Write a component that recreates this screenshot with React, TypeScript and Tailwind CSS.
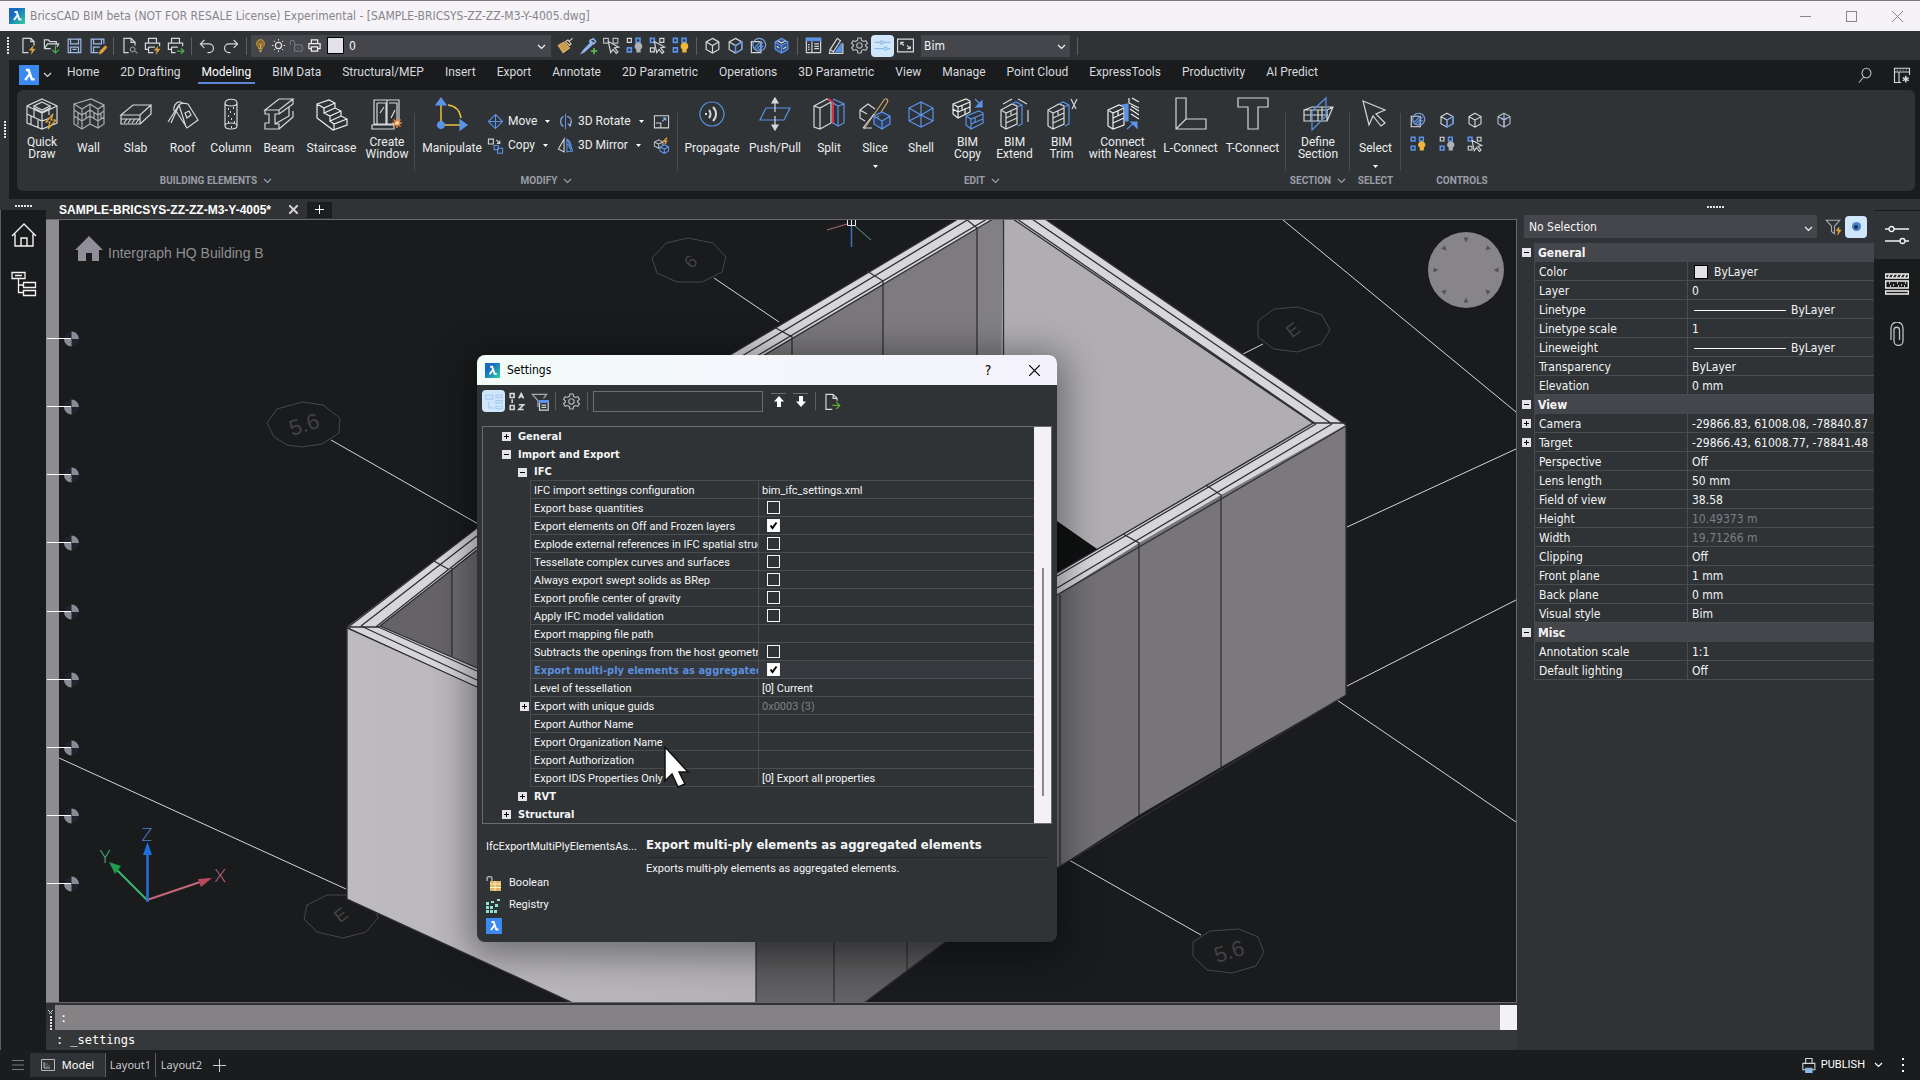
import React from "react";

type P = { d: string; c?: string; f?: string; w?: number };
type IconDef = P[];

const W = "#d5d7da";
const B = "#5b93ea";
const Y = "#e0a53a";
const CUBE = "M12 3l8 4.500v9.500l-8 4.500-8-4.500V7.500zM4 7.500l8 4.500 8-4.500M12 12v9.500";

const small: Record<string, IconDef> = {
  newFile: [{ d: "M12 21H5V3h10l4 4v5M15 3v4h4" }, { d: "M18 12l-5 6h3.500l-1 5 5-6.500H17z", c: Y, f: Y, w: 0.5 }],
  open: [{ d: "M3 16V5h5l2 2h8v4M3 16l4-6h14l-2 4M3 16h8" }, { d: "M17 12v9M13 17.500l4 4 4-4", c: "#4fae4a" }],
  save: [{ d: "M4 4h16v17H4zM7 4v6h10V4M7 21v-7h10v7M9.500 17h5", c: "#9db9e8" }],
  saveAs: [{ d: "M20 10V4H4v17h9M7 4v6h10V4M7 21v-7h8", c: "#9db9e8" }, { d: "M22 12l-7 7-1 4 4-1.500 6-7z", c: Y, f: Y, w: 0.5 }],
  preview: [{ d: "M11 21H5V3h9l5 5v4M14 3v5h5" }, { d: "M16 14a3 3 0 1 1-.1 0M18.500 18.500L22 22", c: "#8d9095" }],
  print: [{ d: "M7 9V3h10v6M7 17H3V9h18v4M7 14h8M7 14v7h6" }, { d: "M19 13l-5 5h3.500l-1 5 5-6.500H18z", c: Y, f: Y, w: 0.5 }],
  printTo: [{ d: "M7 9V3h10v6M7 17H3V9h18v4M7 14h8M7 14v7h5" }, { d: "M14 19h8M19 15.500l3.500 3.500-3.500 3.500", c: "#4fae4a" }],
  undo: [{ d: "M8 5L3 10l5 5M3 10h11a5.500 5.500 0 0 1 0 11h-2" }],
  redo: [{ d: "M16 5l5 5-5 5M21 10H10a5.500 5.500 0 0 0 0 11h2" }],
  bulb: [{ d: "M12 2.500a6.500 6.500 0 0 1 4 11.500c-1 1-1 2-1 3H9c0-1 0-2-1-3A6.500 6.500 0 0 1 12 2.500z", c: "#d39a34", f: "#8a6a30" }, { d: "M9.500 19.500h5M10.500 22h3M10 9l2 3 2-3M12 12v5", c: "#e8b65a" }],
  sun: [{ d: "M12 7a5 5 0 1 1-.1 0z", c: "#e8e8e8", w: 2 }, { d: "M12 1.500v2.500M12 20v2.500M1.500 12H4M20 12h2.500M4.500 4.500l2 2M17.500 17.500l2 2M19.500 4.500l-2 2M6.500 17.500l-2 2", c: "#e8e8e8" }],
  lock: [{ d: "M9 11h12v10H9zM15 15v2.500M9 11V7a3.500 3.500 0 0 0-7 0v4", c: "#7b828c" }],
  printer: [{ d: "M7 9V3h10v6M7 17H3V9h18v8h-4M7 14h10v7H7z", c: "#eeeeee", w: 2 }],
  brush: [{ d: "M21 3l-5 4M15 5l4 5-2 2-5-5z", c: "#d8c9a8" }, { d: "M10 8l7 7-8 6-6-9z", c: "#d8b26a", f: "#c99b4a" }],
  dropper: [{ d: "M13 7l4 4M15 9L6 18l-2 3 3-1.500 9.500-9M14 5.500l4.500 4.500 2.500-3-3-3.500z", c: "#8fb4ee", w: 2 }, { d: "M19 15v8M15 19h8", c: "#5fc04a", w: 2 }],
  pick: [{ d: "M2 3h6v6H2zM14 3h6v6h-6z", c: "#b6bac0" }, { d: "M8 7l3 14 3-4 4 5 2-2-4-5 5-1z", c: W, f: "#2f3336" }],
  bulbOff: [{ d: "M3 3h5v5H3z" }, { d: "M14 3h5v5h-5zM3 15h5v5H3z", c: B, w: 2 }, { d: "M17 9a4 4 0 0 1 2 7.500V20h-4v-3.500A4 4 0 0 1 17 9z", c: "#aeb2b8", f: "#aeb2b8" }],
  selBoxes: [{ d: "M3 3h5v5H3z", c: B, w: 2 }, { d: "M15 3h5v5h-5zM3 15h5v5H3z" }, { d: "M8 7l3 14 3-4 4 5 2-2-4-5 5-1z", c: W, f: "#2f3336" }],
  bulbOn: [{ d: "M3 3h5v5H3zM14 3h5v5h-5zM3 15h5v5H3z", c: B, w: 2 }, { d: "M17 9a4 4 0 0 1 2 7.500V20h-4v-3.500A4 4 0 0 1 17 9z", c: "#f0b63c", f: "#f0b63c" }],
  cube: [{ d: CUBE }],
  cubeBlue: [{ d: CUBE }, { d: "M20 7.500v9.500l-8 4.500V12z", c: B }],
  cubeFace: [{ d: CUBE, c: "#b6bac0" }, { d: "M12 3v18M8 9l4 2.500L16 9", c: "#9db9e8" }],
  cubeFill: [{ d: CUBE, c: B, f: "#35558c" }, { d: "M7 6l5 3 5-3M6 13l3 2M14 16l4-2", c: W }],
  overlap: [{ d: "M3 7h12v14H3z" }, { d: "M13 3a8 8 0 1 1-.1 0z", c: "#7f9fd8" }, { d: "M7 15l8-8M8 18l10-10M12 18l6-6", c: B }],
  props: [{ d: "M3 3h18v18H3z" }, { d: "M3 3h18v3H3z", c: B, f: B }, { d: "M10 7v14M13 10h6M13 13h6M13 16h6M5 11h2M5 14h2M5 17h2" }],
  panelPen: [{ d: "M13 3l4 3-9 14-4-3zM4 17l-1 5h17V9" }, { d: "M18 10v10h-7z", c: B, f: B }],
  gear: [{ d: "M12 8.500a3.500 3.500 0 1 1-.1 0zM10 2.500h4l.6 3 2.400 1.400 3-1 2 3.500-2.400 2v1.200l2.400 2-2 3.500-3-1-2.400 1.400-.6 3h-4l-.6-3L7 17.100l-3 1-2-3.500 2.400-2v-1.200L2 9.400l2-3.500 3 1 2.400-1.400z", c: "#b6bac0" }],
  sliders: [{ d: "M2 8h7M13 8h9M11 6a2 2 0 1 1-.1 0zM2 16h12M18 16h4M16 14a2 2 0 1 1-.1 0z", c: "#8fbdea" }],
  expand: [{ d: "M2 4h20v16H2zM6 11V8h4M6 8l4 4M18 13v3h-4M18 16l-4-4" }],
  move: [{ d: "M12 2v20M2 12h20M12 2l10 10-10 10L2 12z", c: B }],
  copy: [{ d: "M2 3h7v7H2zM13 4l5 5M18 5v4h-4" }, { d: "M10 12h6v6h-6zM15 16h7v7h-7z", c: B }],
  rotate: [{ d: "M9 5a6 7.500 0 0 0 0 14M14 5c7 1 8 9 3 14M20 10l-1 8-4-3", c: "#8fb4ee" }, { d: "M12 1v22", c: B }],
  mirror: [{ d: "M10 3v18L2 17z" }, { d: "M14 3v18l8-1-4-14zM15 10l5 9M15 5l6 12", c: B }],
  scale: [{ d: "M2 4h20v17H2z" }, { d: "M4 14h7v7", c: W }, { d: "M13 12l5-5M14 7h4v4", c: "#8fb4ee" }],
  blockify: [{ d: "M8 4l6 3v6l-6 3-6-3V7zM2 7l6 3 6-3M8 10v6", c: "#b6bac0" }, { d: "M16 11l6 3v6l-6 3-6-3v-6zM10 14l6 3 6-3M16 17v6", c: B, f: "#2f3336" }, { d: "M20 1l-5 5h4l-2 4", c: Y, w: 2 }],
  search: [{ d: "M14 3a6 6.500 0 1 1-.1 0zM10 15l-6 7", c: "#b6bac0" }],
  workspace: [{ d: "M2 3h20v5H2zM2 8v14h9M8 8v14M22 8v4M5 5.500h1M9 5.500h1M13 5.500h1M17 5.500h1" }, { d: "M17 13v9M13 15.500l8 4M21 15.500l-8 4", w: 2 }],
  filter: [{ d: "M3 3h18l-7 8v10l-4-3v-7z", c: "#a9adb3" }, { d: "M20 12l-4 5h3l-1 6 5-7h-3z", c: Y, f: Y, w: 0.5 }],
  filterList: [{ d: "M10 19v-8L3 3h18l-4 5", c: "#a9adb3" }, { d: "M12 11h11v12H12z", f: "#2f3336" }, { d: "M12 11h11v2H12z", c: B, f: B }, { d: "M14.500 16.500h6M14.500 19.500h6" }],
  az: [{ d: "M4 2h5v5H4zM4 17h5v5H4zM6.500 9v5M15 8l3-6 3 6M16 6h4M15 16h6l-6 6h6", w: 2 }],
  tree: [{ d: "M2 4h9v5H2zM15 4h8v3h-8zM15 11h8v3h-8zM15 18h8v3h-8zM6 12v8h5", c: "#a9cdf2" }],
  exportDoc: [{ d: "M14 3H5v19h8M14 3l5 5v3M14 3v5h5" }, { d: "M13 17h9M18 12.500l4.500 4.500-4.500 4.500", c: "#5fae2e" }],
  publish: [{ d: "M8 9V2h9v7M8 18H4V9h17v9h-4" }, { d: "M8 16h9v6H8z", c: "#8ab8e8", f: "#8ab8e8" }],
};

const large: Record<string, IconDef> = {
  quick: [
    { d: "M16 1l15 7v17l-15 6-15-6V8zM1 8l15 7 15-7M16 15v16M16 4l8 4-8 4-8-4zM8 8v2l8 4 8-4V8M1 16l15 7 8-3M8 12v8M12 21v8M5 18v8M23 12v5" },
    { d: "M27 16l-7 8h4l-2 7 8-9h-5z", c: Y },
  ],
  wall: [{ d: "M1 6L18 1l13 6v19l-6 4-8-4-8 5-8-5zM1 6l8 5 8-5 8 5 6-4M9 11v20M17 6v20M25 11v19M1 12l8 5 8-5 8 5 6-4M1 18l8 5 8-5 8 5 6-4M5 14v6M13 14v6M21 14v6M5 21v6M28 15v6", c: "#a9acb0" }],
  slab: [{ d: "M1 17L13 7h18L20 17zM1 17v9h19v-9M20 26l11-10V7M1 21h19M4 25l3-4M8 25l3-4M12 25l3-4M16 25l3-4" }],
  roof: [{ d: "M1 24L12 7l3-2 6 1 10 16-11 8L9 13M12 7l-8 18M12 7l7 22M7 13c-1-7 5-12 9-7M18 15l4-2 2 4-4 3z" }],
  column: [{ d: "M10 5c0-5 12-5 12 0v23c0 4-12 4-12 0zM10 5c0 4 12 4 12 0M10 28c0-4 12-4 12 0" }, { d: "M13 11h1M18 10h1M15 14h1M19 16h1M13 18h1M16 21h1M19 24h1M13 24h1M16 29h1", w: 2 }],
  beam: [{ d: "M2 12L16 1h14L16 12zM2 12v4h4v9H2v6h14l14-12v-6M16 12v4h-4v10h4v5M30 1v5l-14 10M26 9v9L12 26M16 31l14-12" }],
  stairs: [{ d: "M1 6l12-4 6 3v5l6 3v5l6 3v6l-14 5L1 20zM1 6l7 4 11-5M8 10v5l11-5M8 15l6 3 11-5M14 18v5l11-5M14 23l4 3 13-5M18 26v6", c: "#eceded" }],
  window: [{ d: "M3 2h25v24H3zM6 5h9v21M18 5h8v21H6V5M16 2v24M1 27h22v4H1zM9 15l4-6M20 20l4-8" }, { d: "M26 20v10M21 25h10M22.500 21.500l7 7M29.500 21.500l-7 7", c: "#ef8a43", w: 1.5 }, { d: "M25 24h2v2h-2z", c: "#ffe2a8", f: "#fff" }],
  manipulate: [{ d: "M5 5v22h22M12 7c8 1 12 6 13 13", c: "#e6c13c", w: 1.5 }, { d: "M5 0l5 7H0zM24 22l7 5-7 5zM5 23.500a3.500 3.500 0 1 1-.1 0z", c: B, f: B }],
  propagate: [{ d: "M16 4a12 12 0 1 1-.1 0z", c: B }, { d: "M9 16h2M13 12c2 2 2 6 0 8M17 9c4 4 4 10 0 14", w: 2 }],
  pushpull: [{ d: "M7 10h24l-6 12H1z", c: B }, { d: "M16 2v12M16 18v12M16 0l3 5h-6zM16 32l3-5h-6z", f: W }],
  split: [{ d: "M1 8L14 1l4 2v22L7 31l-6-2zM1 8l6 2 11-6M7 10v21" }, { d: "M15 1l5 3v22", c: "#d9304f", w: 2 }, { d: "M20 1l11 5v19l-6 3-5-3M20 5l5 3 6-2M25 8v20", c: B }],
  slice: [{ d: "M5 31L25 2c2-3 5 0 3 3L15 25", c: "#c8a56b" }, { d: "M1 12l8-6 7 5M1 12v8l5 3M1 12l7 4M4 30l11-14M4 30h9" }, { d: "M15 18l8-4 8 4v8l-8 5-8-5zM15 18l8 5 8-5M23 23v8", c: B, f: "#2c3f60" }],
  shell: [{ d: "M16 4l12 6v13l-12 6-12-6V10zM16 4v25M4 10l12 7 12-7M4 23l12-6 12 6", c: B }],
  bimCopy: [
    { d: "M1 6l13-5 4 2v11L6 20l-5-4zM1 6l5 3 12-5M6 9v11M6 14l12-5M1 11l5 3M10 7v5M13 10v6", c: "#eceded" },
    { d: "M14 18l13-5 4 2v10l-12 6-5-4zM14 18l5 3 12-5M19 21v10M19 26l12-5M23 19v5", c: B },
    { d: "M23 1l6 6M30 3v6h-6z", c: B, f: B },
  ],
  bimExtend: [{ d: "M2 12l11-6 5 2v18L7 31l-5-3zM2 12l5 3 11-5M7 15v16M7 20l11-5M7 25l11-5M12 13v5" }, { d: "M13 6l4-2 6 3v19l-4 2M18 9l5-2", c: B }, { d: "M4 6l9-5M19 1l9 5M29 12v12" }],
  bimTrim: [{ d: "M2 12l11-6 5 2v18L7 31l-5-3zM2 12l5 3 11-5M7 15v16M7 20l11-5M7 25l11-5M12 13v5" }, { d: "M13 6l4-2 6 3v19l-4 2M18 9l5-2", c: B }, { d: "M25 1l5 10M31 1l-5 10" }],
  connect: [{ d: "M1 12l11-5 5 2v18L6 31l-5-3zM1 12l5 3 11-5M6 15v16M6 20l11-5M6 25l11-5M11 13v5M22 0v5l10 5M25 0l7 4M24 8l8 5M23 11l9 6M24 16l8 5", c: "#eceded" }, { d: "M15 7l6-1v17h-3V10z", c: B, f: B }, { d: "M20 31l8-7M24 24h6v6z", c: B, f: B }],
  lcon: [{ d: "M1 0h10v21h20v10H1zM1 31l10-10" }],
  tcon: [{ d: "M1 0h30v9H21v22H11V9H1z" }],
  section: [{ d: "M2 12l8-3h21l-6 14H2zM2 12h23l6-3M25 12v11M2 17h24M9 12v11M16 12v11M20 9v13" }, { d: "M10 13L24 0v18L10 32z", c: B }],
  cursor: [{ d: "M3 3l22 9-9 4 9 9-4 3-8-10-4 9z" }],
};

function Svg({ def, size, box, sw = 1.3 }: { def: IconDef; size: number; box: number; sw?: number }) {
  return (
    <svg width={size} height={size} viewBox={`0 0 ${box} ${box}`} fill="none" strokeWidth={sw} className="shrink-0 overflow-visible" aria-hidden="true">
      {def.map((p, i) => (
        <path key={i} d={p.d} stroke={p.c ?? W} fill={p.f ?? "none"} strokeWidth={p.w ?? sw} />
      ))}
    </svg>
  );
}
const S = ({ n, size = 19 }: { n: string; size?: number }) => <Svg def={small[n]} size={size} box={24} sw={1.5} />;
const L = ({ n }: { n: string }) => <Svg def={large[n]} size={32} box={32} sw={1.2} />;

function Chevron({ className = "" }: { className?: string }) {
  return (
    <svg width="9" height="6" viewBox="0 0 9 6" fill="none" stroke="currentColor" strokeWidth="1.2" className={className} aria-hidden="true">
      <path d="M1 1l3.500 3.500L8 1" />
    </svg>
  );
}
function Caret() {
  return (
    <svg width="5" height="3" viewBox="0 0 5 3" className="shrink-0 fill-white" aria-hidden="true">
      <path d="M0 0h5L2.500 3z" />
    </svg>
  );
}
function Logo({ size, gradient }: { size: number; gradient?: boolean }) {
  return (
    <svg width={size} height={size} viewBox="0 0 16 16" className="shrink-0" aria-hidden="true">
      <defs>
        <linearGradient id="logo" x1="0" y1="0" x2="1" y2="1">
          <stop offset="0.300" stopColor="#1769c4" />
          <stop offset="1" stopColor="#2fd0a0" />
        </linearGradient>
      </defs>
      <rect width="16" height="16" fill={gradient ? "url(#logo)" : "#3a8af0"} />
      <path d="M5.500 4h2.200l2.600 7.500h2.200M8.300 7.500L5 12" fill="none" stroke="#fff" strokeWidth="1.900" />
    </svg>
  );
}
function Grip({ vertical, n = 5 }: { vertical?: boolean; n?: number }) {
  return (
    <span className={vertical ? "flex flex-col gap-px" : "flex gap-px"} aria-hidden="true">
      {Array.from({ length: n }, (_, i) => (
        <span key={i} className="size-[2px] bg-neutral-200" />
      ))}
    </span>
  );
}
const Sep = () => <span className="mx-[4px] h-[18px] w-px shrink-0 bg-[#5a5d61]" />;

function Tool({ n, label, active }: { n: string; label: string; active?: boolean }) {
  return (
    <button aria-label={label} className={active ? "flex h-[22px] w-[23px] shrink-0 items-center justify-center rounded-sm bg-[#cfe6fb]" : "flex h-[22px] w-[23px] shrink-0 items-center justify-center"}>
      <S n={n} />
    </button>
  );
}

function TitleBar() {
  return (
    <header className="flex h-[31px] shrink-0 items-center border-t border-[#7d7b80] bg-[#f5f3f8] pl-[9px] font-['DejaVu_Sans_Condensed','Noto_Sans',sans-serif] text-xs text-[#85858a]">
      <Logo size={16} gradient />
      <h1 className="ml-[5px] flex-1 text-xs">BricsCAD BIM beta (NOT FOR RESALE License) Experimental - [SAMPLE-BRICSYS-ZZ-ZZ-M3-Y-4005.dwg]</h1>
      <button aria-label="Minimize" className="flex w-[46px] justify-center">
        <svg width="11" height="11" stroke="currentColor"><path d="M0 5.500h11" /></svg>
      </button>
      <button aria-label="Maximize" className="flex w-[46px] justify-center">
        <svg width="11" height="11" stroke="currentColor" fill="none"><rect x="0.500" y="0.500" width="10" height="10" /></svg>
      </button>
      <button aria-label="Close" className="flex w-[46px] justify-center">
        <svg width="11" height="11" stroke="currentColor"><path d="M0 0l11 11M11 0L0 11" /></svg>
      </button>
    </header>
  );
}

function QuickBar() {
  return (
    <div className="flex h-[29px] shrink-0 items-center bg-[#2f3336] pl-[7px] text-neutral-100">
      <Grip vertical n={6} />
      <div className="ml-[8px] flex items-center">
        <Tool n="newFile" label="New" />
        <Tool n="open" label="Open" />
        <Tool n="save" label="Save" />
        <Tool n="saveAs" label="Save as" />
        <Sep />
        <Tool n="preview" label="Print preview" />
        <Tool n="print" label="Print" />
        <Tool n="printTo" label="Publish" />
        <Sep />
        <Tool n="undo" label="Undo" />
        <Tool n="redo" label="Redo" />
        <Sep />
      </div>
      <div className="relative flex h-[22px] w-[300px] items-center bg-[#45464b] pl-[2px]">
        <span className="flex w-[74px] items-center gap-[3px]">
          <S n="bulb" size={15} />
          <S n="sun" size={15} />
          <S n="lock" size={15} />
          <S n="printer" size={15} />
        </span>
        <span className="size-[17px] border border-black bg-[#e4e2e8]" />
        <select aria-label="Layer" className="h-full flex-1 appearance-none bg-transparent pl-[5px] font-['DejaVu_Sans_Condensed',sans-serif] text-xs">
          <option>0</option>
        </select>
        <Chevron className="pointer-events-none absolute right-[5px] top-[9px]" />
      </div>
      <div className="ml-[3px] flex items-center">
        <Tool n="brush" label="Match properties" />
        <Tool n="dropper" label="Pick properties" />
        <Tool n="pick" label="Select similar" />
        <Tool n="bulbOff" label="Hide" />
        <Tool n="selBoxes" label="Isolate" />
        <Tool n="bulbOn" label="Show all" />
        <Sep />
        <Tool n="cube" label="Box" />
        <Tool n="cubeBlue" label="Solid" />
        <Tool n="overlap" label="Intersect" />
        <Tool n="cubeFill" label="Render" />
        <Sep />
        <Tool n="props" label="Properties" />
        <Tool n="panelPen" label="Tool panel" />
        <Tool n="gear" label="Settings" />
        <Tool n="sliders" label="Sliders" active />
        <Tool n="expand" label="Full screen" />
      </div>
      <div className="relative ml-[4px] flex h-[22px] w-[149px] items-center bg-[#45464b]">
        <select aria-label="Workspace" className="h-full flex-1 appearance-none bg-transparent pl-[3px] font-['DejaVu_Sans_Condensed',sans-serif] text-xs">
          <option>Bim</option>
        </select>
        <Chevron className="pointer-events-none absolute right-[4px] top-[9px]" />
      </div>
      <span className="ml-[7px] h-[18px] w-px bg-[#5a5d61]" />
    </div>
  );
}

const tabs = ["Home", "2D Drafting", "Modeling", "BIM Data", "Structural/MEP", "Insert", "Export", "Annotate", "2D Parametric", "Operations", "3D Parametric", "View", "Manage", "Point Cloud", "ExpressTools", "Productivity", "AI Predict"];

function RB({ n, label, w, caret }: { n: string; label: string[]; w: string; caret?: boolean }) {
  return (
    <button className={`flex flex-col items-center text-xs leading-[12px] text-[#eceded] ${w}`}>
      <span className="flex h-[36px] items-center"><L n={n} /></span>
      <span className="flex h-[32px] flex-col justify-center whitespace-nowrap">
        {label.map((l) => <span key={l}>{l}</span>)}
      </span>
      {caret && <span className="mt-px"><Caret /></span>}
    </button>
  );
}
function Group({ title, chevron, children, last }: { title: string; chevron?: boolean; children: React.ReactNode; last?: boolean }) {
  return (
    <section className="relative flex flex-col px-[2px] pt-[6px]">
      <div className="flex h-[77px]">{children}</div>
      <h2 className="flex items-center justify-center gap-[6px] text-[10px] font-bold leading-[15px] text-[#9a9ea6]">
        {title}
        {chevron && <Chevron />}
      </h2>
      {!last && <span className="absolute right-0 top-[23px] h-[58px] w-px bg-[#484b4f]" />}
    </section>
  );
}
function MiniCmd({ n, label }: { n: string; label: string }) {
  return (
    <button className="flex h-[24px] items-center gap-[4px] whitespace-nowrap text-xs text-[#eceded]">
      <S n={n} size={17} />
      {label}
      <span className="ml-[4px]"><Caret /></span>
    </button>
  );
}

function Ribbon() {
  return (
    <div className="flex shrink-0 bg-[#2f3336] font-['Roboto',sans-serif]">
      <div className="flex w-[9px] shrink-0 items-center justify-center"><Grip vertical n={6} /></div>
      <div className="min-w-0 flex-1 bg-[#191b1d] pb-2">
        <div className="flex h-[30px] items-center pl-[10px] pr-[9px] text-[#d8dadd]">
          <button aria-label="Application menu" className="flex items-center gap-[4px]">
            <Logo size={20} />
            <Chevron />
          </button>
          <nav className="ml-[15px] flex flex-1 gap-[21px] pb-[3px]" aria-label="Ribbon tabs">
            {tabs.map((t) => (
              <a key={t} href="#" className={t === "Modeling" ? "-mx-[4px] border-b-2 border-[#5b86d6] px-[4px] text-xs leading-[19px] text-white" : "border-b-2 border-transparent text-xs leading-[19px]"}>{t}</a>
            ))}
          </nav>
          <button aria-label="Search" className="mr-[19px]"><S n="search" size={18} /></button>
          <button aria-label="Workspace settings"><S n="workspace" size={18} /></button>
        </div>
        <div className="ml-[8px] mr-[5px] flex h-[101px] rounded-md bg-[#2f3336]">
          <Group title="BUILDING ELEMENTS" chevron>
            <RB n="quick" label={["Quick", "Draw"]} w="w-[46px]" />
            <RB n="wall" label={["Wall"]} w="w-[47px]" />
            <RB n="slab" label={["Slab"]} w="w-[47px]" />
            <RB n="roof" label={["Roof"]} w="w-[47px]" />
            <RB n="column" label={["Column"]} w="w-[50px]" />
            <RB n="beam" label={["Beam"]} w="w-[46px]" />
            <RB n="stairs" label={["Staircase"]} w="w-[59px]" />
            <RB n="window" label={["Create", "Window"]} w="w-[52px]" />
          </Group>
          <Group title="MODIFY" chevron>
            <RB n="manipulate" label={["Manipulate"]} w="w-[70px]" />
            <div className="flex gap-[10px] pt-[13px]">
              <div className="w-[60px]"><MiniCmd n="move" label="Move" /><MiniCmd n="copy" label="Copy" /></div>
              <div className="w-[86px]"><MiniCmd n="rotate" label="3D Rotate" /><MiniCmd n="mirror" label="3D Mirror" /></div>
              <div className="w-[23px]">
                <button aria-label="Scale" className="flex h-[24px] items-center"><S n="scale" size={17} /></button>
                <button aria-label="Blockify" className="flex h-[24px] items-center"><S n="blockify" size={17} /></button>
              </div>
            </div>
          </Group>
          <Group title="EDIT" chevron>
            <RB n="propagate" label={["Propagate"]} w="w-[64px]" />
            <RB n="pushpull" label={["Push/Pull"]} w="w-[62px]" />
            <RB n="split" label={["Split"]} w="w-[46px]" />
            <RB n="slice" label={["Slice"]} w="w-[46px]" caret />
            <RB n="shell" label={["Shell"]} w="w-[46px]" />
            <RB n="bimCopy" label={["BIM", "Copy"]} w="w-[47px]" />
            <RB n="bimExtend" label={["BIM", "Extend"]} w="w-[47px]" />
            <RB n="bimTrim" label={["BIM", "Trim"]} w="w-[47px]" />
            <RB n="connect" label={["Connect", "with Nearest"]} w="w-[75px]" />
            <RB n="lcon" label={["L-Connect"]} w="w-[61px]" />
            <RB n="tcon" label={["T-Connect"]} w="w-[63px]" />
          </Group>
          <Group title="SECTION" chevron>
            <RB n="section" label={["Define", "Section"]} w="w-[60px]" />
          </Group>
          <Group title="SELECT">
            <RB n="cursor" label={["Select"]} w="w-[47px]" caret />
          </Group>
          <Group title="CONTROLS" last>
            <div className="grid w-[118px] grid-cols-4 content-start pl-[4px] pt-[12px]">
              {["overlap", "cubeBlue", "cube", "cubeFace", "bulbOn", "bulbOff", "selBoxes"].map((n) => (
                <button key={n} aria-label={n} className="flex h-[24px] items-center pl-[2px]"><S n={n} size={18} /></button>
              ))}
            </div>
          </Group>
        </div>
      </div>
    </div>
  );
}

const levels = [338, 406, 474, 542, 611, 679, 747, 815, 883];
const grey = "#47474a";
const greyText = "#424244";

function Scene() {
  return (
    <svg viewBox="46 220 1470 782" preserveAspectRatio="xMinYMin slice" className="block h-full w-full" role="img" aria-label="3D view of the building model">
      <defs>
        <linearGradient id="front" x1="0" x2="1">
          <stop offset="0" stopColor="#bebbbf" />
          <stop offset="1" stopColor="#b4b2b5" />
        </linearGradient>
        <linearGradient id="pier" x1="0" x2="0" y1="0" y2="1">
          <stop offset="0" stopColor="#504f52" />
          <stop offset="1" stopColor="#646264" />
        </linearGradient>
      </defs>
      <rect x="46" y="219" width="1471" height="784" fill="#191b1d" />
      <rect x="46" y="219" width="13" height="784" fill="#8d8c90" />

      <g fill="none" stroke={grey} strokeWidth="1">
        <path d="M302 402l21 3 17 13-1 15-17 11-20 3-15-2-13-8-7-14 10-14z" />
        <path d="M688 238l25 5 13 14-4 15-20 10h-25l-20-9-5-15 14-15z" />
        <path d="M1298 307l24 8 8 15-9 14-24 8-23-3-16-12v-16l16-12z" />
        <path d="M347 895h-20l-20 10-3 14 13 13 26 6 23-6 12-14-2-7z" />
        <path d="M1239 929l19 8 6 15-8 14-24 7-25-3-14-14v-14l17-11z" />
      </g>
      <path d="M331 440L480 525M714 278l65 44M1263 344l-20 10M1283 220l233 192M1347 527l169-78M1347 686l169-86M1337 700l179 122M1069 860l132 75M59 758l287 131" fill="none" stroke="#d6d6d6" strokeWidth="1" />
      <g fill={greyText} textAnchor="middle" className="font-['Liberation_Sans',sans-serif]">
        <text transform="translate(304 424) rotate(-18)" y="8" fontSize="22">5.6</text>
        <text transform="translate(1229 951) rotate(-18)" y="8" fontSize="22">5.6</text>
        <text transform="translate(690 261) rotate(-45)" y="7" fontSize="18">6</text>
        <text transform="translate(341 915) rotate(-38)" y="6" fontSize="18">E</text>
        <text transform="translate(1293 330) rotate(-38)" y="6" fontSize="18">E</text>
      </g>

      <path d="M761 357l232-137h11v137z" fill="#7a787b" />
      <path d="M883 281l94-53v129h-94z" fill="#7d7b7e" />
      <path d="M977 228l16-8h11v137h-27z" fill="#828083" />
      <path d="M1003 219h12l300 204-218 126-97-62z" fill="#b0aeb1" />
      <path d="M1057 521l40 28-40 24z" fill="#101112" />
      <path d="M730 355l228-136h36L762 356z" fill="#d8d6da" />
      <path d="M1014 219h31l301 206-289 170v-22l258-150z" fill="#d8d6da" />
      <path d="M1057 595l82-52v272l-82 53z" fill="#737174" />
      <path d="M1139 543l82-48v272l-82 48z" fill="#777578" />
      <path d="M1221 495l125-70v270l-125 72z" fill="#7c797c" />
      <path d="M347 628l130 59 280 0v316H573L347 899z" fill="url(#front)" />
      <path d="M756 930h205l-97 73H756z" fill="url(#pier)" />
      <path d="M378 626l99-76v120z" fill="#656366" />
      <path d="M452 569l25-19v120l-25-13z" fill="#6f6d70" />
      <path d="M347 627l130-99v22l-98 76 98 42v19z" fill="#d8d6da" />

      <g fill="none" stroke="#303033" strokeWidth="1.300">
        <path d="M730 355l228-136M742 356l227-137M757 356l230-137M761 357l232-138" />
        <path d="M774 327l18 10v20M867 271l16 10v76M966 219l11 9v129M1003.500 219v137" />
        <path d="M1045 219l301 206v270l-289 173M1032 219l300 205M1017 219l299 205M1013 219l300 204M1313 423h33" />
        <path d="M1346 426l-289 169M1332 424l-275 164M1316 424l-259 152M1313 423l-256 150" />
        <path d="M1206 485l15 10v272M1123 534l16 9v272M1060 595v272" />
        <path d="M347 628l130-100M361 626l116-90M377 626l100-79M380 626l97-76M434 561l14 8M347 627h33" />
        <path d="M347 628l130 59M361 626l116 54M376 626l101 45M380 626l97 42M452 568v88" />
        <path d="M347 628v271l226 104M756 940v63M834 940v63M907 940v31M948 940l-84 63" />
      </g>

      {levels.map((y) => (
        <g key={y}>
          <circle cx="71.500" cy={y + 1} r="7.500" fill="#20232e" />
          <path d={`M71.500 ${y + 1}v-7.500a7.500 7.500 0 0 1 7.500 7.500zM71.500 ${y + 1}v7.500a7.500 7.500 0 0 1-7.500-7.500z`} fill="#8b8b96" />
          <path d={`M47 ${y}.500h24`} stroke="#fff" />
        </g>
      ))}

      <path d="M75 250l14-14 14 14h-4v11h-7v-8h-6v8h-8v-11z" fill="#8f8e99" />
      <text x="108" y="258" fontSize="14" fill="#8f8f93" className="font-['Liberation_Sans',sans-serif]">Intergraph HQ Building B</text>

      <path d="M847.500 219.500h8v6h-8zM851.500 219v6" stroke="#e9e9e9" fill="none" />
      <path d="M847 224l-20 6" stroke="#b06a78" />
      <path d="M851.500 226v21" stroke="#3a6fc4" strokeWidth="1.500" />
      <path d="M855 226l16 14" stroke="#5aa58a" />

      <circle cx="1466" cy="270" r="38" fill="#87858a" />
      {[0, 45, 90, 135, 180, 225, 270, 315].map((a) => (
        <path key={a} d="M1463.500 237.500h5l-2.500 5z" fill="#55545a" transform={`rotate(${a} 1466 270)`} />
      ))}

      <path d="M147 900l62-21" stroke="#c4687a" strokeWidth="2" />
      <path d="M198 879l14-1-11 9z" fill="#b8485c" />
      <path d="M147 900l-30-30" stroke="#35b96b" strokeWidth="2" />
      <path d="M109 862l12 4-6 8z" fill="#1f9c4c" />
      <path d="M147.500 902v-50" stroke="#2a6fd6" strokeWidth="2.500" />
      <path d="M147.500 842l4.500 13h-9z" fill="#1d6fe0" />
      <g textAnchor="middle" fontSize="18" className="font-['Lato',sans-serif] font-light">
        <text x="147" y="841" fill="#4b7fc8">Z</text>
        <text x="105" y="863" fill="#4fbf7c">Y</text>
        <text x="220" y="882" fill="#c96f80">X</text>
      </g>
    </svg>
  );
}

function Expander({ open, label }: { open?: boolean; label: string }) {
  return (
    <button aria-label={label} aria-expanded={!!open} className="relative flex size-[9px] items-center justify-center bg-[#e4e2e8]">
      <span className="h-px w-[5px] bg-black" />
      {!open && <span className="absolute h-[5px] w-px bg-black" />}
    </button>
  );
}

type Row = { l: string; v?: React.ReactNode; head?: boolean; exp?: boolean; dim?: boolean };
const lineVal = (
  <span className="flex items-center gap-[5px]"><span className="ml-[2px] h-px w-[92px] bg-white" />ByLayer</span>
);
const props: Row[] = [
  { l: "General", head: true },
  { l: "Color", v: <span className="flex items-center gap-[6px]"><span className="ml-[2px] size-[14px] border border-black bg-[#e4e2e8]" />ByLayer</span> },
  { l: "Layer", v: "0" },
  { l: "Linetype", v: lineVal },
  { l: "Linetype scale", v: "1" },
  { l: "Lineweight", v: lineVal },
  { l: "Transparency", v: "ByLayer" },
  { l: "Elevation", v: "0 mm" },
  { l: "View", head: true },
  { l: "Camera", v: "-29866.83, 61008.08, -78840.87", exp: true },
  { l: "Target", v: "-29866.43, 61008.77, -78841.48", exp: true },
  { l: "Perspective", v: "Off" },
  { l: "Lens length", v: "50 mm" },
  { l: "Field of view", v: "38.58" },
  { l: "Height", v: "10.49373 m", dim: true },
  { l: "Width", v: "19.71266 m", dim: true },
  { l: "Clipping", v: "Off" },
  { l: "Front plane", v: "1 mm" },
  { l: "Back plane", v: "0 mm" },
  { l: "Visual style", v: "Bim" },
  { l: "Misc", head: true },
  { l: "Annotation scale", v: "1:1" },
  { l: "Default lighting", v: "Off" },
];

function PropertiesPanel() {
  return (
    <aside className="flex w-[357px] shrink-0 flex-col bg-[#2f3336] font-['DejaVu_Sans_Condensed',sans-serif] text-xs text-neutral-100">
      <div className="flex h-[16px] items-center justify-center pl-[40px]"><Grip n={6} /></div>
      <div className="flex items-center pl-[7px]">
        <div className="relative flex h-[23px] w-[293px] bg-[#45464b]">
          <select aria-label="Selection" className="h-full flex-1 appearance-none bg-transparent pl-[5px]">
            <option>No Selection</option>
          </select>
          <Chevron className="pointer-events-none absolute right-[4px] top-[11px]" />
        </div>
        <button aria-label="Quick select" className="ml-[7px]"><S n="filter" size={18} /></button>
        <button aria-label="Show preview" className="ml-[3px] flex size-[22px] items-center justify-center rounded-sm bg-[#cfe6fb]">
          <span className="flex size-[9px] items-center justify-center rounded-full bg-[#4a7fc8]"><span className="size-[4px] rounded-full bg-[#16305c]" /></span>
        </button>
      </div>
      <table className="mt-[5px] w-full table-fixed border-separate border-spacing-0">
        <colgroup><col className="w-[17px]" /><col className="w-[153px]" /><col /></colgroup>
        <tbody>
          {props.map((r) =>
            r.head ? (
              <tr key={r.l} className="h-[19px]">
                <td className="p-0 pl-[5px]"><Expander open label={`Collapse ${r.l}`} /></td>
                <th colSpan={2} className="bg-[#45464b] p-0 pl-[4px] text-left leading-[18px]">{r.l}</th>
              </tr>
            ) : (
              <tr key={r.l} className="h-[19px]">
                <td className="p-0 pl-[5px]">{r.exp && <Expander label={`Expand ${r.l}`} />}</td>
                <th scope="row" className="border-b border-l border-[#4a4c50] p-0 pl-[4px] pt-[2px] text-left font-normal leading-[16px]">{r.l}</th>
                <td className={r.dim ? "overflow-hidden whitespace-nowrap border-b border-l border-[#4a4c50] p-0 pl-[4px] pt-[2px] leading-[16px] text-[#7d7f83]" : "overflow-hidden whitespace-nowrap border-b border-l border-[#4a4c50] p-0 pl-[4px] pt-[2px] leading-[16px]"}>{r.v}</td>
              </tr>
            )
          )}
        </tbody>
      </table>
    </aside>
  );
}

type SRow = { l: string; lv?: number; open?: boolean; v?: string; chk?: boolean; exp?: boolean; sel?: boolean; dim?: boolean };
const settings: SRow[] = [
  { l: "General", lv: 1 },
  { l: "Import and Export", lv: 1, open: true },
  { l: "IFC", lv: 2, open: true },
  { l: "IFC import settings configuration", v: "bim_ifc_settings.xml" },
  { l: "Export base quantities", chk: false },
  { l: "Export elements on Off and Frozen layers", chk: true },
  { l: "Explode external references in IFC spatial structure", chk: false },
  { l: "Tessellate complex curves and surfaces", chk: false },
  { l: "Always export swept solids as BRep", chk: false },
  { l: "Export profile center of gravity", chk: false },
  { l: "Apply IFC model validation", chk: false },
  { l: "Export mapping file path" },
  { l: "Subtracts the openings from the host geometry", chk: false },
  { l: "Export multi-ply elements as aggregated elements", chk: true, sel: true },
  { l: "Level of tessellation", v: "[0] Current" },
  { l: "Export with unique guids", v: "0x0003 (3)", exp: true, dim: true },
  { l: "Export Author Name" },
  { l: "Export Organization Name" },
  { l: "Export Authorization" },
  { l: "Export IDS Properties Only", v: "[0] Export all properties" },
  { l: "RVT", lv: 2 },
  { l: "Structural", lv: 1 },
];

function Check({ id, on }: { id: string; on: boolean }) {
  return (
    <span className="relative ml-[5px] flex size-[13px]">
      <input id={id} type="checkbox" defaultChecked={on} className="peer size-[13px] appearance-none border border-neutral-100 checked:bg-white" />
      <svg viewBox="0 0 13 13" className="pointer-events-none absolute inset-0 hidden fill-none stroke-black peer-checked:block" strokeWidth="2" aria-hidden="true">
        <path d="M3.500 6.500l2 2.500 4-5.500" />
      </svg>
    </span>
  );
}

function SettingsDialog() {
  return (
    <div role="dialog" aria-label="Settings" className="absolute left-[477px] top-[355px] flex w-[580px] flex-col overflow-hidden rounded-lg bg-[#2f3336] font-['Roboto',sans-serif] text-[11px] text-neutral-100 shadow-[0_6px_36px_8px_rgba(0,0,0,0.4)]">
      <div className="flex h-[30px] items-center bg-linear-to-r from-[#f2fcf8] via-[#f4f6fc] to-[#f4f3fd] pl-[8px] font-['DejaVu_Sans_Condensed',sans-serif] text-black">
        <Logo size={15} gradient />
        <h2 className="ml-[7px] flex-1 text-xs">Settings</h2>
        <button aria-label="Help" className="w-[46px] text-sm">?</button>
        <button aria-label="Close settings" className="flex w-[46px] justify-center">
          <svg width="11" height="11" stroke="currentColor" strokeWidth="1.200"><path d="M0 0l11 11M11 0L0 11" /></svg>
        </button>
      </div>
      <div className="flex h-[32px] items-center pl-[5px]">
        <Tool n="tree" label="Categorized" active />
        <Tool n="az" label="Sort alphabetically" />
        <Tool n="filterList" label="Filter" />
        <Sep />
        <Tool n="gear" label="Options" />
        <Sep />
        <input aria-label="Search settings" className="ml-px h-[21px] w-[170px] border border-[#6b6d70] bg-transparent px-1" />
        <button aria-label="Previous" className="ml-[8px] flex w-[15px] justify-center border-t border-[#6b6d70] py-[2px]">
          <svg width="10" height="11" viewBox="0 0 10 11" className="fill-white"><path d="M5 0l5 5.500H7V11H3V5.500H0z" /></svg>
        </button>
        <button aria-label="Next" className="ml-[7px] flex w-[15px] justify-center border-t border-[#6b6d70] py-[2px]">
          <svg width="10" height="11" viewBox="0 0 10 11" className="fill-white"><path d="M5 11L0 5.500h3V0h4v5.500h3z" /></svg>
        </button>
        <span className="w-[3px]" />
        <Sep />
        <Tool n="exportDoc" label="Export settings" />
      </div>
      <div className="mx-[5px] mt-[9px] flex border border-[#6b6d70]">
        <div className="min-w-0 flex-1">
          <table className="w-full table-fixed border-separate border-spacing-0">
            <colgroup><col className="w-[47px]" /><col className="w-[228px]" /><col /></colgroup>
            <tbody>
              {settings.map((r, i) =>
                r.lv ? (
                  <tr key={r.l} className="h-[18px] font-['DejaVu_Sans_Condensed',sans-serif]">
                    {r.lv === 1 ? (
                      <th colSpan={3} className="p-0 pl-[19px] text-left leading-[17px]">
                        <span className="flex items-center gap-[7px]"><Expander open={r.open} label={`Toggle ${r.l}`} />{r.l}</span>
                      </th>
                    ) : (
                      <>
                        <td className="p-0 pl-[35px]"><Expander open={r.open} label={`Toggle ${r.l}`} /></td>
                        <th colSpan={2} className={r.open ? "border-b border-[#4a4c50] p-0 pl-[4px] text-left leading-[17px]" : "p-0 pl-[4px] text-left leading-[17px]"}>{r.l}</th>
                      </>
                    )}
                  </tr>
                ) : (
                  <tr key={r.l} className={r.sel ? "h-[18px] bg-[#35383c]" : "h-[18px]"}>
                    <td className="bg-[#2f3336] p-0 pl-[37px]">{r.exp && <Expander label={`Expand ${r.l}`} />}</td>
                    <th scope="row" className={r.sel ? "overflow-hidden whitespace-nowrap border-b border-l border-[#55575b] p-0 pl-[3px] pt-[2px] text-left font-['DejaVu_Sans_Condensed',sans-serif] leading-[15px] text-[#5b8fdf]" : "overflow-hidden whitespace-nowrap border-b border-l border-[#4a4c50] p-0 pl-[3px] pt-[2px] text-left font-normal leading-[15px]"}>
                      {r.chk === undefined ? r.l : <label htmlFor={`s${i}`}>{r.l}</label>}
                    </th>
                    {r.chk === undefined ? (
                      <td className={r.dim ? "border-b border-l border-[#4a4c50] p-0 pl-[3px] pt-[2px] leading-[15px] text-[#7d7f83]" : "border-b border-l border-[#4a4c50] p-0 pl-[3px] pt-[2px] leading-[15px]"}>{r.v}</td>
                    ) : (
                      <td className="border-b border-l border-[#4a4c50] p-0 pl-[3px]"><Check id={`s${i}`} on={r.chk} /></td>
                    )}
                  </tr>
                )
              )}
            </tbody>
          </table>
        </div>
        <div className="flex w-[17px] shrink-0 flex-col items-center bg-[#f3f1f5] pt-[141px]" aria-hidden="true">
          <span className="h-[228px] w-[2px] bg-[#8a888c]" />
        </div>
      </div>
      <div className="flex h-[118px] px-[9px] pt-[13px]">
        <div className="w-[160px] shrink-0">
          <p className="leading-[20px]">IfcExportMultiPlyElementsAs...</p>
          <p className="mt-[15px] flex h-[22px] items-center gap-[8px]">
            <svg width="15" height="15" viewBox="0 0 15 15" aria-hidden="true">
              <path d="M1 5V3a2.500 2.500 0 0 1 5 0v3" fill="none" stroke="#a8abb0" strokeWidth="1.500" />
              <path d="M4 5h11v10H4z" fill="#dcb765" />
              <path d="M4 8h11M4 11.500h11M9 5v10" stroke="#fff0c4" />
            </svg>
            Boolean
          </p>
          <p className="flex h-[22px] items-center gap-[8px]">
            <svg width="15" height="15" viewBox="0 0 15 15" className="fill-[#8fe3cf]" aria-hidden="true">
              <path d="M0 4h3v3H0zM0 8h3v3H0zM0 12h3v3H0zM4 8h3v3H4zM4 12h3v3H4zM8 12h3v3H8zM9 6h3v3H9zM5 3h3v2H5zM11 1h3v2h-3z" />
            </svg>
            Registry
          </p>
          <div className="mt-[2px]"><Logo size={16} /></div>
        </div>
        <div className="min-w-0 flex-1">
          <h3 className="border-b border-[#25282a] pb-[5px] font-['DejaVu_Sans_Condensed',sans-serif] text-[13px] font-bold leading-[15px]">Export multi-ply elements as aggregated elements</h3>
          <p className="mt-[3px] leading-[15px]">Exports multi-ply elements as aggregated elements.</p>
        </div>
      </div>
    </div>
  );
}

function Workspace() {
  return (
    <main className="flex min-h-0 flex-1 bg-[#2f3336]">
      <nav className="flex w-[46px] shrink-0 flex-col" aria-label="Side panels">
        <div className="flex h-[11px] items-end justify-center pb-[3px]"><Grip n={6} /></div>
        <div className="flex flex-1 flex-col items-center gap-[23px] border-l border-[#5d5f63] bg-[#191b1d] pt-[12px]">
          <button aria-label="Home">
            <svg width="26" height="26" viewBox="0 0 26 26" fill="none" stroke="#f3f3f3" strokeWidth="1.400"><path d="M1 14L13 2l12 12M4 12v12h18V12M10 24v-8h6v8" /></svg>
          </button>
          <button aria-label="Structure">
            <svg width="26" height="26" viewBox="0 0 26 26" fill="none" stroke="#f3f3f3" strokeWidth="1.300"><path d="M1 1.500h13v6H1zM4 4.500h7M7.500 7.500v14h5M7.500 14h5M12.500 11.500h12v5h-12zM12.500 19.500h12v5h-12z" /></svg>
          </button>
        </div>
      </nav>
      <div className="flex min-w-0 flex-1 flex-col">
        <div className="flex h-[20px] shrink-0 items-center bg-[#303234] pl-[13px] pt-px text-white">
          <span className="font-['Liberation_Sans',sans-serif] text-xs font-bold">SAMPLE-BRICSYS-ZZ-ZZ-M3-Y-4005*</span>
          <button aria-label="Close tab" className="ml-[18px]">
            <svg width="9" height="9" stroke="#cfcfd2" strokeWidth="2"><path d="M0 0l9 9M9 0L0 9" /></svg>
          </button>
          <button aria-label="New tab" className="ml-[9px] flex h-[16px] w-[25px] items-center justify-center bg-[#1b1d1f]">
            <svg width="9" height="9" stroke="#fff"><path d="M4.500 0v9M0 4.500h9" /></svg>
          </button>
        </div>
        <div className="min-h-0 flex-1 border-y border-r border-[#66686b]"><Scene /></div>
        <div className="mt-[2px] flex h-[25px] shrink-0 bg-[#848284] font-['DejaVu_Sans_Mono',monospace] text-xs text-white">
          <span className="flex w-[9px] flex-col items-center bg-[#2f3336] pt-[5px]">
            <svg width="5" height="5" stroke="#cfcfd2"><path d="M0 0l5 5M5 0L0 5" /></svg>
            <span className="mt-[2px]"><Grip vertical n={5} /></span>
          </span>
          <span className="flex-1 pl-[5px] leading-[27px]">:</span>
          <span className="w-[17px] bg-[#f3f1f5]" />
        </div>
        <label className="flex h-[20px] shrink-0 items-center bg-[#363739] pl-[10px] font-['DejaVu_Sans_Mono',monospace] text-xs text-white">
          <span>:</span>
          <input aria-label="Command line" defaultValue="_settings" className="ml-[7px] flex-1 bg-transparent" />
        </label>
      </div>
      <PropertiesPanel />
      <nav className="flex w-[46px] shrink-0 flex-col bg-[#191b1d]" aria-label="Panels">
        <div className="h-[11px] bg-[#2f3336]" />
        <button aria-label="Properties" className="flex h-[49px] items-center justify-center border-t border-[#191b1d] bg-[#2f3336]">
          <svg width="24" height="20" viewBox="0 0 24 20" fill="none" stroke="#f3f3f3" strokeWidth="1.300"><path d="M0 4h4M9 4h15M0 16h15M20 16h4" /><circle cx="6.500" cy="4" r="2.500" /><circle cx="17.500" cy="16" r="2.500" /></svg>
        </button>
        <button aria-label="Compositions" className="flex h-[50px] items-center justify-center">
          <svg width="24" height="22" viewBox="0 0 24 22" fill="none" stroke="#f3f3f3" strokeWidth="1.300"><path d="M.7 1h22.600v4H.7zM.7 8h22.600v7H.7zM.7 18h22.600v3H.7zM3 4l2-2M7 4l2-2M11 4l2-2M15 4l2-2M19 4l2-2" /><path d="M4 10h1M8 12h1M12 10h1M16 12h1M20 10h1M5 13h1M13 13h1M19 13h1" strokeWidth="1.500" /></svg>
        </button>
        <button aria-label="Attachments" className="flex h-[50px] items-center justify-center">
          <svg width="14" height="24" viewBox="0 0 14 24" fill="none" stroke="#bdbfc2" strokeWidth="1.300"><path d="M1 18V6a5.500 5.500 0 0 1 12 0v13a4.300 4.300 0 0 1-9 0V8a2.700 2.700 0 0 1 5.500 0v10" /></svg>
        </button>
      </nav>
    </main>
  );
}

function StatusBar() {
  return (
    <footer className="flex h-[30px] shrink-0 items-center bg-[#1a1c1e] pl-[12px] font-['Noto_Sans',sans-serif] text-[11px] text-[#c8cacd]">
      <button aria-label="Menu">
        <svg width="12" height="10" stroke="#77797c"><path d="M0 .5h12M0 5h12M0 9.500h12" /></svg>
      </button>
      <button className="ml-[6px] flex h-[24px] w-[76px] items-center justify-center gap-[7px] border-r border-[#5a5d61] bg-[#2f3336] text-white">
        <svg width="14" height="12" fill="none" stroke="#b5b7ba"><path d="M.5.500h13v11H.5zM3 3v6h6" /><path d="M3.500 5h4M3.500 7h6" strokeDasharray="1 1" /></svg>
        Model
      </button>
      <button className="h-[24px] w-[50px] border-r border-[#5a5d61]">Layout1</button>
      <button className="h-[24px] w-[51px]">Layout2</button>
      <button aria-label="Add layout" className="ml-[6px]">
        <svg width="13" height="13" stroke="currentColor"><path d="M6.500 0v13M0 6.500h13" /></svg>
      </button>
      <button className="ml-auto flex items-center gap-[4px] font-['Roboto',sans-serif] text-white">
        <S n="publish" size={17} />
        PUBLISH
        <span className="ml-[5px]"><Chevron /></span>
      </button>
      <button aria-label="More" className="ml-[19px] mr-[16px] flex flex-col gap-[4px]">
        <span className="size-[2px] bg-white" /><span className="size-[2px] bg-white" /><span className="size-[2px] bg-white" />
      </button>
    </footer>
  );
}

export default function App() {
  return (
    <div className="relative flex h-screen flex-col overflow-hidden bg-[#191b1d]">
      <TitleBar />
      <QuickBar />
      <Ribbon />
      <Workspace />
      <StatusBar />
      <SettingsDialog />
      <svg width="26" height="42" viewBox="0 0 26 42" className="pointer-events-none absolute left-[664px] top-[746px]" aria-hidden="true">
        <path d="M1 1v34l7-7 6 13 7-3-6-12h9z" fill="#fff" stroke="#111" strokeWidth="1.500" />
      </svg>
    </div>
  );
}
